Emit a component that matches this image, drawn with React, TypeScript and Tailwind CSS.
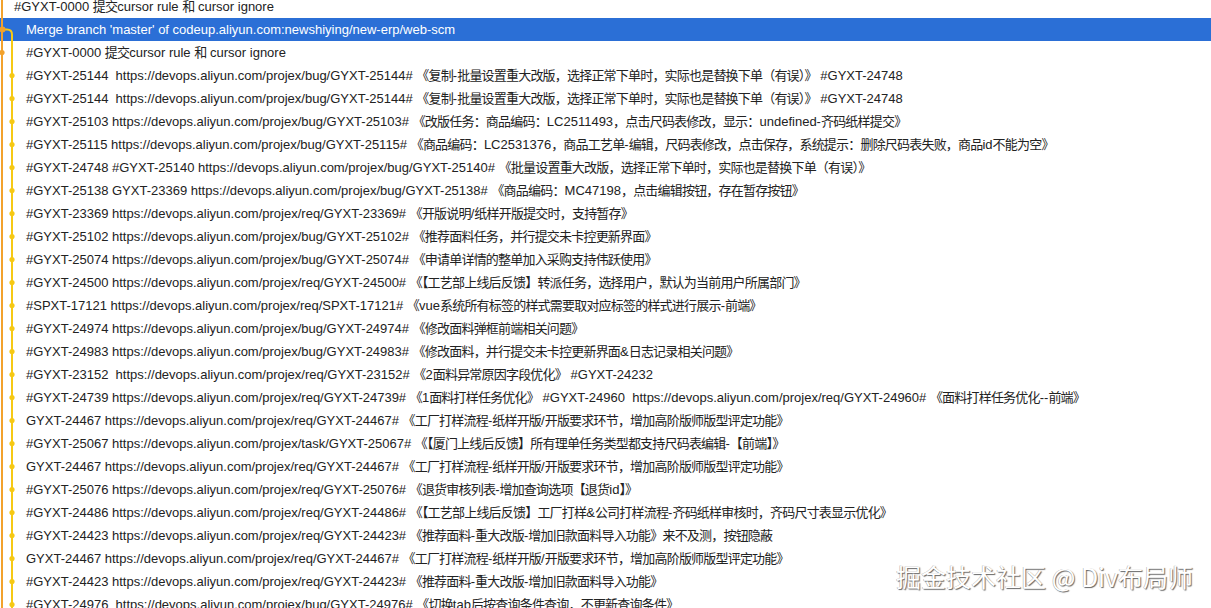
const ORANGE = "#f2a22c";
const YELLOW = "#f6c914";

const commits: string[] = [
  "#GYXT-0000 提交cursor rule 和 cursor ignore",
  "Merge branch 'master' of codeup.aliyun.com:newshiying/new-erp/web-scm",
  "#GYXT-0000 提交cursor rule 和 cursor ignore",
  "#GYXT-25144  https://devops.aliyun.com/projex/bug/GYXT-25144# 《复制-批量设置重大改版，选择正常下单时，实际也是替换下单（有误）》 #GYXT-24748",
  "#GYXT-25144  https://devops.aliyun.com/projex/bug/GYXT-25144# 《复制-批量设置重大改版，选择正常下单时，实际也是替换下单（有误）》 #GYXT-24748",
  "#GYXT-25103 https://devops.aliyun.com/projex/bug/GYXT-25103# 《改版任务：商品编码：LC2511493，点击尺码表修改，显示：undefined-齐码纸样提交》",
  "#GYXT-25115 https://devops.aliyun.com/projex/bug/GYXT-25115# 《商品编码：LC2531376，商品工艺单-编辑，尺码表修改，点击保存，系统提示：删除尺码表失败，商品id不能为空》",
  "#GYXT-24748 #GYXT-25140 https://devops.aliyun.com/projex/bug/GYXT-25140# 《批量设置重大改版，选择正常下单时，实际也是替换下单（有误）》",
  "#GYXT-25138 GYXT-23369 https://devops.aliyun.com/projex/bug/GYXT-25138# 《商品编码：MC47198，点击编辑按钮，存在暂存按钮》",
  "#GYXT-23369 https://devops.aliyun.com/projex/req/GYXT-23369# 《开版说明/纸样开版提交时，支持暂存》",
  "#GYXT-25102 https://devops.aliyun.com/projex/bug/GYXT-25102# 《推荐面料任务，并行提交未卡控更新界面》",
  "#GYXT-25074 https://devops.aliyun.com/projex/bug/GYXT-25074# 《申请单详情的整单加入采购支持伟跃使用》",
  "#GYXT-24500 https://devops.aliyun.com/projex/req/GYXT-24500# 《【工艺部上线后反馈】转派任务，选择用户，默认为当前用户所属部门》",
  "#SPXT-17121 https://devops.aliyun.com/projex/req/SPXT-17121# 《vue系统所有标签的样式需要取对应标签的样式进行展示-前端》",
  "#GYXT-24974 https://devops.aliyun.com/projex/bug/GYXT-24974# 《修改面料弹框前端相关问题》",
  "#GYXT-24983 https://devops.aliyun.com/projex/bug/GYXT-24983# 《修改面料，并行提交未卡控更新界面&日志记录相关问题》",
  "#GYXT-23152  https://devops.aliyun.com/projex/req/GYXT-23152# 《2面料异常原因字段优化》 #GYXT-24232",
  "#GYXT-24739 https://devops.aliyun.com/projex/req/GYXT-24739# 《1面料打样任务优化》 #GYXT-24960  https://devops.aliyun.com/projex/req/GYXT-24960# 《面料打样任务优化--前端》",
  "GYXT-24467 https://devops.aliyun.com/projex/req/GYXT-24467# 《工厂打样流程-纸样开版/开版要求环节，增加高阶版师版型评定功能》",
  "#GYXT-25067 https://devops.aliyun.com/projex/task/GYXT-25067# 《【厦门上线后反馈】所有理单任务类型都支持尺码表编辑-【前端】》",
  "GYXT-24467 https://devops.aliyun.com/projex/req/GYXT-24467# 《工厂打样流程-纸样开版/开版要求环节，增加高阶版师版型评定功能》",
  "#GYXT-25076 https://devops.aliyun.com/projex/req/GYXT-25076# 《退货审核列表-增加查询选项【退货id】》",
  "#GYXT-24486 https://devops.aliyun.com/projex/req/GYXT-24486# 《【工艺部上线后反馈】工厂打样&公司打样流程-齐码纸样审核时，齐码尺寸表显示优化》",
  "#GYXT-24423 https://devops.aliyun.com/projex/req/GYXT-24423# 《推荐面料-重大改版-增加旧款面料导入功能》来不及测，按钮隐蔽",
  "GYXT-24467 https://devops.aliyun.com/projex/req/GYXT-24467# 《工厂打样流程-纸样开版/开版要求环节，增加高阶版师版型评定功能》",
  "#GYXT-24423 https://devops.aliyun.com/projex/req/GYXT-24423# 《推荐面料-重大改版-增加旧款面料导入功能》",
  "#GYXT-24976  https://devops.aliyun.com/projex/bug/GYXT-24976# 《切换tab后按查询条件查询，不更新查询条件》",
];

const CJK = /([\u3000-\u303f\u4e00-\u9fff\uff00-\uffef]+)/;

// CJK runs are set a little tighter so widths follow the reference
function Message({ text }: { text: string }) {
  return (
    <span className="whitespace-pre leading-none">
      {text.split(CJK).map((part, i) =>
        i % 2 === 1 ? (
          <span key={i} className="tracking-[-0.8px]">
            {part}
          </span>
        ) : (
          part
        )
      )}
    </span>
  );
}

function Graph({ index }: { index: number }) {
  // lane 0: orange at x=2, lane 1: yellow at x=12
  return (
    <svg width="26" height="23" viewBox="0 0 26 23" className="shrink-0">
      <line x1="2" y1="0" x2="2" y2="23" stroke={ORANGE} strokeWidth="2" />
      {index === 1 && (
        <>
          <path
            d="M2 11.5 H7 Q12 11.5 12 16.5 V23"
            fill="none"
            stroke={YELLOW}
            strokeWidth="2"
          />
          <circle cx="2.5" cy="11.5" r="3" fill={ORANGE} />
        </>
      )}
      {index >= 2 && (
        <line x1="12" y1="0" x2="12" y2="23" stroke={YELLOW} strokeWidth="2" />
      )}
      {index === 2 && <circle cx="2" cy="11.5" r="2.6" fill={ORANGE} />}
      {index >= 3 && <circle cx="12" cy="11.5" r="2.6" fill={YELLOW} />}
    </svg>
  );
}

export default function App() {
  return (
    <div
      className="relative h-[608px] w-[1211px] overflow-hidden bg-white text-[13px] text-[#222]"
      style={{ fontFamily: '"Liberation Sans", "Noto Sans CJK SC", sans-serif' }}
    >
      <div className="-mt-[5px] flex flex-col">
        {commits.map((msg, i) => (
          <div
            key={i}
            className={`flex h-[23px] items-center ${
              i === 1 ? "bg-[#2b6fd6] text-white" : ""
            }`}
          >
            {i === 0 ? (
              <svg width="14" height="23" viewBox="0 0 14 23" className="shrink-0">
                <line x1="2" y1="0" x2="2" y2="23" stroke={ORANGE} strokeWidth="2" />
              </svg>
            ) : (
              <Graph index={i} />
            )}
            <Message text={msg} />
          </div>
        ))}
      </div>

      {/* watermark */}
      <div
        className="absolute right-[18px] top-[558px] whitespace-nowrap text-[25px] text-white"
        style={{
          fontFamily: '"Noto Sans CJK SC", sans-serif',
          textShadow: "1px 1px 1px #666, -0.5px -0.5px 0.5px #aaa",
        }}
      >
        掘金技术社区 @ Div布局师
      </div>
    </div>
  );
}
